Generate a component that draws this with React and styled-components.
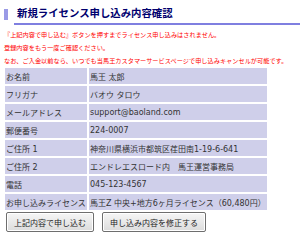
import styled, { createGlobalStyle } from "styled-components";

const GlobalStyle = createGlobalStyle`
  html, body {
    margin: 0;
    padding: 0;
    background: #ffffff;
  }
  body {
    font-family: "DejaVu Sans", "Noto Sans CJK JP", sans-serif;
    color: #333333;
  }
`

const Page = styled.div`
  width: 300px;
  height: 240px;
  overflow: hidden;
  padding: 7px 3px 0 3px;
  box-sizing: border-box;
`

const Heading = styled.h1`
  display: flex;
  align-items: flex-end;
  margin: 0 0 0 1px;
  font-size: 10.4px;
  font-weight: bold;
  color: #00006e;
`

const Marker = styled.span`
  width: 4px;
  height: 11px;
  margin: 0 6px 5px 0;
  background: #9a9ae6;
  flex-shrink: 0;
`

const Title = styled.span`
  flex: 1;
  padding: 0 0 3px 3px;
  margin-right: -3px;
  line-height: 13px;
  border-bottom: 2px solid #7f7fe0;
`

const Notice = styled.div`
  margin: 3px 0 0 1px;
  font-size: 6.2px;
  line-height: 13px;
  color: #ff0000;
  white-space: nowrap;
`

const Line = styled.p`
  margin: 0;
`

const Table = styled.table`
  margin-top: -1px;
  border-collapse: separate;
  border-spacing: 2px;
  font-size: 8px;
  color: #333333;
`

const Cell = styled.td`
  height: 16px;
  padding: 0 1px;
  box-sizing: border-box;
  background: #cfcfea;
  white-space: nowrap;
  vertical-align: middle;
  width: ${(p) => (p.$label ? "82px" : "173px")};
`

const Buttons = styled.div`
  display: flex;
  gap: 8px;
  margin: 0 0 0 3px;
`

const Button = styled.button`
  height: 20px;
  padding: 0 7px;
  font-family: "DejaVu Sans", "Noto Sans CJK JP", sans-serif;
  font-size: 8px;
  color: #222222;
  background: linear-gradient(#f6f6f6, #dcdcdc);
  border: 1px solid #6e6e6e;
  border-radius: 2px;
  box-shadow: inset 0 0 0 1px #ffffff;
  cursor: pointer;
`

const rows = [
  ["お名前", "馬王 太郎"],
  ["フリガナ", "バオウ タロウ"],
  ["メールアドレス", "support@baoland.com"],
  ["郵便番号", "224-0007"],
  ["ご住所 1", "神奈川県横浜市都筑区荏田南1-19-6-641"],
  ["ご住所 2", "エンドレエスロード内　馬王運営事務局"],
  ["電話", "045-123-4567"],
  ["お申し込みライセンス", "馬王Z 中央+地方6ヶ月ライセンス（60,480円）"],
];

const App = () => {
  return (
    <Page>
      <GlobalStyle />
      <Heading>
        <Marker />
        <Title>新規ライセンス申し込み内容確認</Title>
      </Heading>
      <Notice>
        <Line>『上記内容で申し込む』ボタンを押すまでライセンス申し込みはされません。</Line>
        <Line>登録内容をもう一度ご確認ください。</Line>
        <Line>なお、ご入金以前なら、いつでも当馬王カスタマーサービスページで申し込みキャンセルが可能です。</Line>
      </Notice>
      <Table>
        <tbody>
          {rows.map(([label, value]) => (
            <tr key={label}>
              <Cell $label>{label}</Cell>
              <Cell>{value}</Cell>
            </tr>
          ))}
        </tbody>
      </Table>
      <Buttons>
        <Button>上記内容で申し込む</Button>
        <Button>申し込み内容を修正する</Button>
      </Buttons>
    </Page>
  );
};

export default App;
